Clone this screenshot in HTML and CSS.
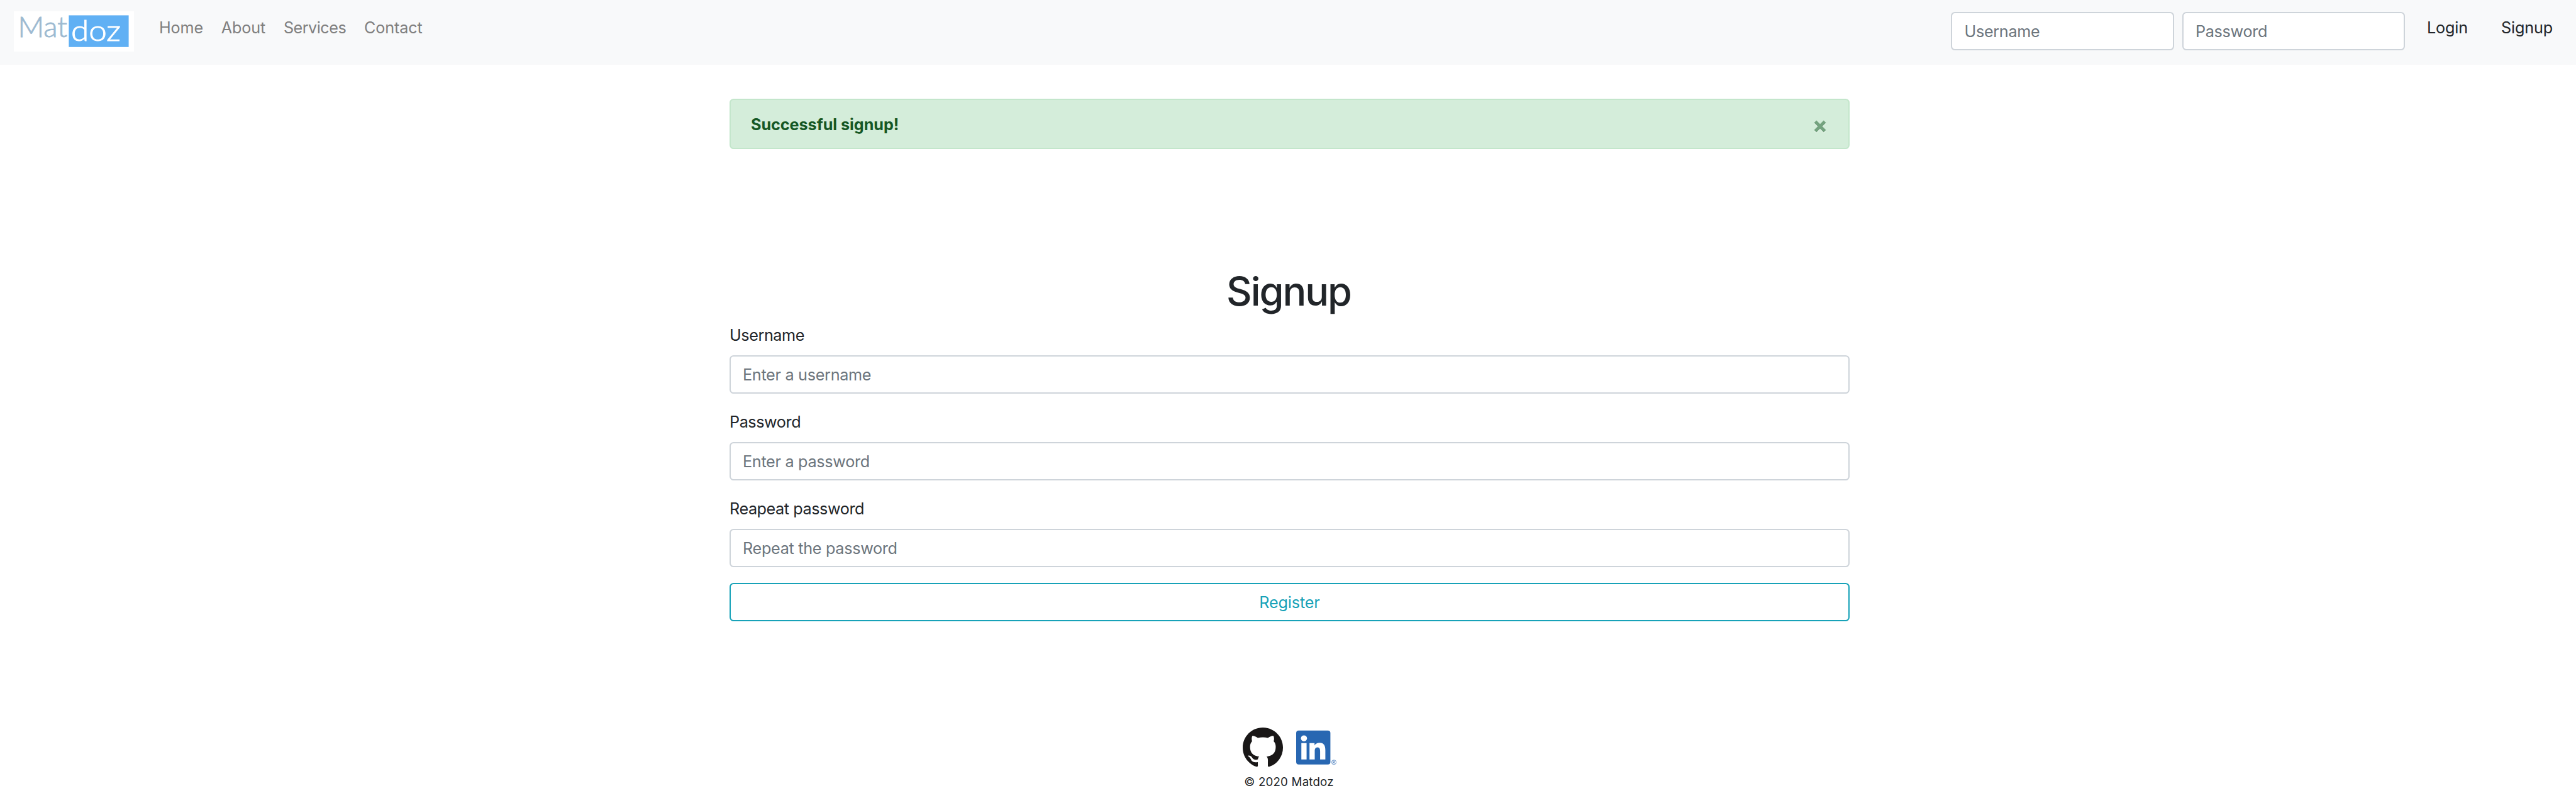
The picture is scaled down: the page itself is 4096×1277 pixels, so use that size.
FILE: index.html
```
<!DOCTYPE html>
<html lang="en">
<head>
<meta charset="utf-8">
<title>Matdoz</title>
<link rel="stylesheet" href="styles.css">
</head>
<body>
<nav class="navbar">
  <a class="brand" href="#">
    <svg class="brand-logo" viewBox="0 0 191 64" aria-label="Matdoz">
      <rect width="191" height="64" fill="#fff"/>
      <rect x="87.4" y="6.4" width="95.2" height="50.4" fill="#60b0f4"/>
      <text class="logo-text logo-mat" x="6.5" y="41.3" textLength="78.5" lengthAdjust="spacingAndGlyphs">Mat</text>
      <text class="logo-text logo-doz" x="91" y="46.9" textLength="79" lengthAdjust="spacingAndGlyphs">doz</text>
    </svg>
  </a>
  <div class="nav-links">
    <a href="#">Home</a>
    <a href="#">About</a>
    <a class="tight" href="#">Services</a>
    <a href="#">Contact</a>
  </div>
  <form class="login">
    <input class="field" type="text" placeholder="Username">
    <input class="field" type="password" placeholder="Password">
    <a class="login-link" href="#">Login</a>
    <a class="login-link signup-link" href="#">Signup</a>
  </form>
</nav>
<main class="content">
  <div class="alert" role="alert">
    <strong>Successful signup!</strong>
    <svg class="close" viewBox="0 0 20 20" fill="none" stroke-width="5.2">
      <path d="M2.400 2.400L17.600 17.600M17.600 2.400L2.400 17.600" stroke="#fff" stroke-opacity=".6" transform="translate(0 1.3)"/>
      <path d="M2.400 2.400L17.600 17.600M17.600 2.400L2.400 17.600" stroke="#74a37f"/>
    </svg>
  </div>
  <h1 class="title">Signup</h1>
  <form class="signup">
    <div class="group">
      <label for="username">Username</label>
      <input class="field" id="username" type="text" placeholder="Enter a username">
    </div>
    <div class="group">
      <label for="password">Password</label>
      <input class="field" id="password" type="password" placeholder="Enter a password">
    </div>
    <div class="group">
      <label for="repeat">Reapeat password</label>
      <input class="field" id="repeat" type="password" placeholder="Repeat the password">
    </div>
    <button class="register" type="button">Register</button>
  </form>
</main>
<footer class="footer">
  <div class="social">
    <svg class="github" viewBox="0 0 16 16"><path fill="#191717" d="M8 0C3.58 0 0 3.58 0 8c0 3.54 2.29 6.53 5.47 7.59.4.07.55-.17.55-.38 0-.19-.01-.82-.01-1.49-2.01.37-2.53-.49-2.69-.94-.09-.23-.48-.94-.82-1.13-.28-.15-.68-.52-.01-.53.63-.01 1.08.58 1.23.82.72 1.21 1.87.87 2.33.66.07-.52.28-.87.51-1.07-1.78-.2-3.64-.89-3.64-3.95 0-.87.31-1.59.82-2.15-.08-.2-.36-1.02.08-2.12 0 0 .67-.21 2.2.82.64-.18 1.32-.27 2-.27s1.36.09 2 .27c1.53-1.04 2.2-.82 2.2-.82.44 1.1.16 1.92.08 2.12.51.56.82 1.27.82 2.15 0 3.07-1.87 3.75-3.65 3.95.29.25.54.73.54 1.48 0 1.07-.01 1.93-.01 2.2 0 .21.15.46.55.38A8.01 8.01 0 0 0 16 8c0-4.42-3.58-8-8-8z"/></svg>
    <svg class="linkedin" viewBox="0 0 80 80">
      <rect y="6" width="68" height="67.500" rx="5" fill="#2867b2"/>
      <circle cx="15.500" cy="21.500" r="6" fill="#fff"/>
      <path fill="#fff" d="M10.300 31h10.400v32.500H10.300zM26.500 31h10v4.500c1.600-3 5-5.300 10-5.300 9 0 11.500 6 11.500 14.800v18.500H47.600V47.500c0-4.400-.6-8.200-5.200-8.200s-5.500 3.700-5.500 8v16.200H26.500z"/>
      <circle cx="75" cy="69" r="4.500" fill="none" stroke="#2867b2" stroke-width=".8"/>
      <path fill="none" stroke="#2867b2" stroke-width=".9" d="M73.400 71.800v-5.600h1.800a1.500 1.500 0 0 1 0 3h-1.800m1.800 0l1.700 2.600"/>
    </svg>
  </div>
  <p class="copyright">© 2020 Matdoz</p>
</footer>
</body>
</html>
```
FILE: styles.css
```
* { box-sizing: border-box; }
body {
  margin: 0;
  background: #fff;
  color: #212529;
  font-family: Inter, "Liberation Sans", sans-serif;
  font-size: 25.2px;
  line-height: 41px;
  letter-spacing: -.15px;
}
a { text-decoration: none; color: inherit; }

.navbar {
  display: flex;
  align-items: flex-start;
  height: 103px;
  padding: 18px 37px 0 22px;
  background: #f8f9fa;
}
.brand-logo { display: block; width: 191px; height: 64px; overflow: visible; }
.logo-text { font-family: Lato, sans-serif; font-weight: 300; font-size: 45px; letter-spacing: 0; stroke-width: .9px; }
.logo-mat { fill: #9dbad1; stroke: #9dbad1; }
.logo-doz { fill: #fff; stroke: #fff; }
.nav-links { display: flex; gap: 28.8px; margin: 6px 0 0 40px; color: #7f7f7f; }
.tight { letter-spacing: -.5px; }
.login { display: flex; margin: 1px 0 0 auto; }
.field {
  display: block;
  width: 100%;
  height: 61px;
  padding: 0 19px;
  border: 2px solid #ced4da;
  border-radius: 6.4px;
  background: #fff;
  font: inherit;
  letter-spacing: -.3px;
  color: #495057;
}
.field::placeholder { color: #6c757d; opacity: 1; }
.login .field { width: 354.5px; margin-right: 13px; }
.login-link { margin: 5px 0 0 21.5px; }
.signup-link { margin-left: 53px; }

.content { width: 1781px; margin: 54px 0 0 1160px; }
.alert {
  display: flex;
  align-items: center;
  justify-content: space-between;
  height: 80px;
  padding: 2px 35px 0 32px;
  background: #d4edda;
  border: 2px solid #c3e6cb;
  border-radius: 6.4px;
  color: #155724;
}
.alert strong { font-weight: 700; letter-spacing: -.05px; }
.close { width: 20px; height: 20px; margin-top: 5px; overflow: visible; }
.title {
  margin: 189px 0 12px;
  padding-right: 3px;
  font-size: 62.9px;
  line-height: 75px;
  font-weight: 500;
  letter-spacing: -2px;
  text-align: center;
}
.group { margin-bottom: 25px; }
.group label { display: block; margin-bottom: 11px; letter-spacing: -.43px; }
.register {
  display: block;
  width: 100%;
  height: 61px;
  padding: 2px 0 0;
  border: 2px solid #17a2b8;
  border-radius: 6.4px;
  background: transparent;
  color: #17a2b8;
  font: inherit;
  letter-spacing: -.15px;
}

.footer { width: 149px; margin: 169px 0 0 1976px; }
.social { display: flex; justify-content: space-between; }
.social svg { display: block; width: 64px; height: 64px; }
.copyright {
  margin: 4px 0 0;
  padding-right: 2px;
  font-size: 18.7px;
  line-height: 38px;
  letter-spacing: .2px;
  text-align: center;
  white-space: nowrap;
}
```
